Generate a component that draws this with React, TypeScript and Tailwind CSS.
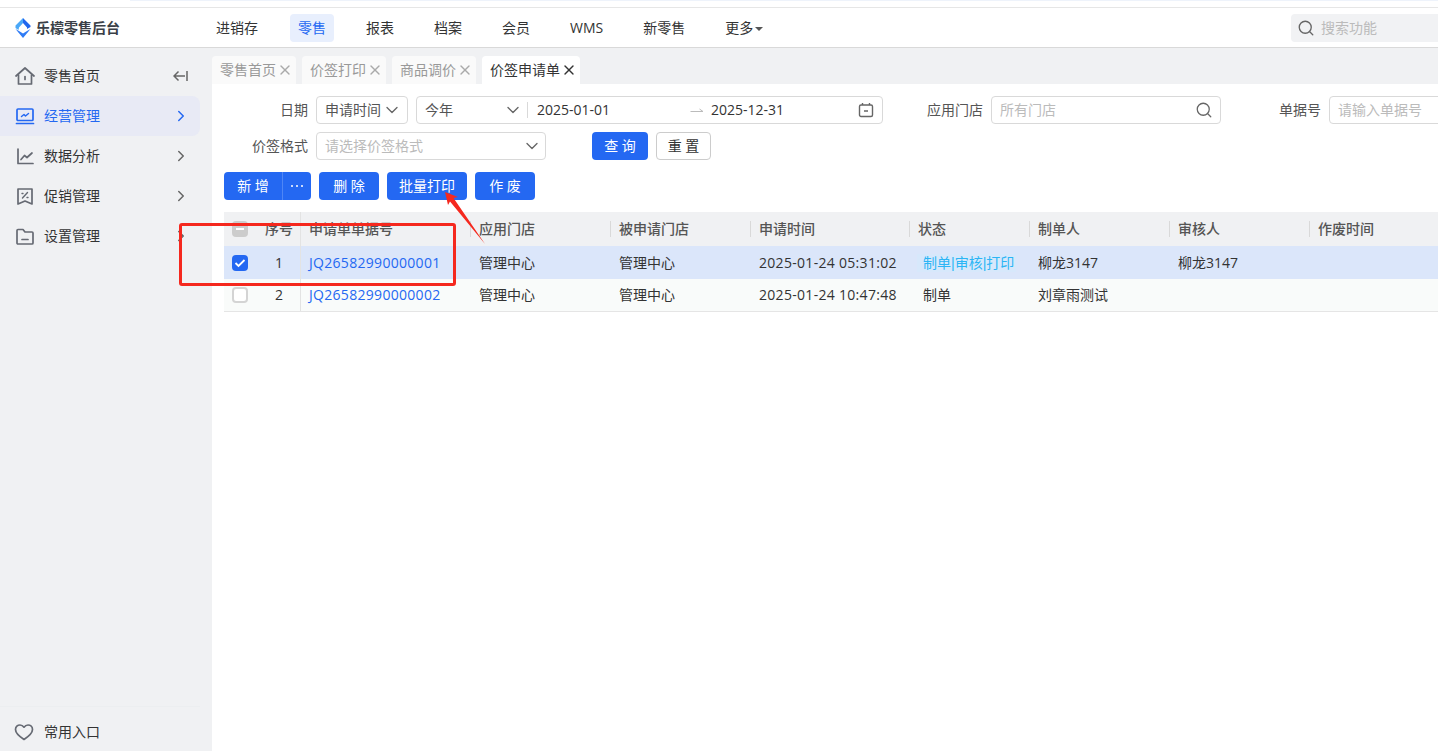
import { ChevronDown, ChevronRight, Search, X } from 'lucide-react'

const font = { fontFamily: '"Open Sans", "Noto Sans CJK SC", sans-serif' }

const navItems = ['进销存', '零售', '报表', '档案', '会员', 'WMS', '新零售']
const tabs = ['零售首页', '价签打印', '商品调价', '价签申请单']
const columns = ['应用门店', '被申请门店', '申请时间', '状态', '制单人', '审核人', '作废时间']
const gridCols = 'grid grid-cols-[38px_38px_170px_140px_140px_159px_120px_140px_140px_1fr]'

function Logo() {
  return (
    <svg width="16" height="20" viewBox="0 0 16 20">
      <path d="M8 0 L15.5 7.5 L15.5 9 L12 11 L12 9.5 L8 5 Z" fill="#1f66ee" />
      <path d="M8 0 L0.5 7.5 L0.5 10 L3.5 12 L4 9.5 L8 5 Z" fill="#4aa8f8" />
      <path d="M0.5 11 L8 20 L15.5 11 L12 13 L8 15.5 L4 13 Z" fill="#2f7bf5" />
      <path d="M8 7 L11 10.2 L8 13.4 L5 10.2 Z" fill="#fff" />
    </svg>
  )
}

function MenuIcon({ name, active }: { name: string; active?: boolean }) {
  const color = active ? '#2468f2' : '#666a73'
  return (
    <svg width="20" height="20" viewBox="0 0 20 20" fill="none" stroke={color} strokeWidth="1.7" strokeLinejoin="round" strokeLinecap="round">
      {name === 'home' && (
        <>
          <path d="M1 10 L10 2 L19 10" />
          <path d="M3.5 9 V18 H16.5 V9" />
          <path d="M10 10.5 V13.5" />
        </>
      )}
      {name === 'monitor' && (
        <>
          <rect x="2" y="3" width="16" height="11.5" rx="1" />
          <path d="M1.5 17.5 H18.5" />
          <path d="M6.5 10.5 L9 8.5 L10.5 10 L13.5 7.5" strokeWidth="1.5" />
        </>
      )}
      {name === 'chart' && (
        <>
          <path d="M3 3 V17.5 H18" />
          <path d="M6 13.5 L9.5 9.5 L12 11.5 L17 7" />
        </>
      )}
      {name === 'tag' && (
        <>
          <path d="M3 3 H17 V18 L10 15 L3 18 Z" />
          <path d="M7.5 12 L12.5 6.5" strokeWidth="1.4" />
          <path d="M7 7.5 H8 M12 11.5 H13" strokeWidth="1.4" />
        </>
      )}
      {name === 'folder' && (
        <>
          <path d="M2 4.5 Q2 3.5 3 3.5 H8 L10 6 H17 Q18 6 18 7 V17 Q18 18 17 18 H3 Q2 18 2 17 Z" />
          <path d="M7 13.5 H13" />
        </>
      )}
      {name === 'heart' && <path d="M10 17.5 C4 13.5 1.5 10.5 1.5 7.5 C1.5 4.8 3.6 3 6 3 C7.6 3 9 3.8 10 5.2 C11 3.8 12.4 3 14 3 C16.4 3 18.5 4.8 18.5 7.5 C18.5 10.5 16 13.5 10 17.5 Z" />}
    </svg>
  )
}

function SideItem({ icon, label, active, tail }: { icon: string; label: string; active?: boolean; tail?: React.ReactNode }) {
  return (
    <div className={`flex items-center h-10 w-[200px] pl-[15px] rounded-r-lg ${active ? 'bg-[#e8eaf5] text-[#2468f2]' : 'text-[#333]'}`}>
      <MenuIcon name={icon} active={active} />
      <span className="ml-[9px] text-sm flex-1">{label}</span>
      <span className="w-[19px] mr-[10px] flex justify-center">{tail}</span>
    </div>
  )
}

function Sidebar() {
  const chevron = <ChevronRight size={18} className="text-[#666]" />
  return (
    <aside className="w-[212px] shrink-0 bg-[#f0f1f3] flex flex-col pt-2">
      <SideItem
        icon="home"
        label="零售首页"
        tail={
          <svg width="15" height="12" viewBox="0 0 15 12" fill="none" stroke="#666" strokeWidth="1.5">
            <path d="M14 1 V11 M12 6 H1 M5.5 1.5 L1 6 L5.5 10.5" />
          </svg>
        }
      />
      <SideItem icon="monitor" label="经营管理" active tail={<ChevronRight size={18} className="text-[#2468f2]" />} />
      <SideItem icon="chart" label="数据分析" tail={chevron} />
      <SideItem icon="tag" label="促销管理" tail={chevron} />
      <SideItem icon="folder" label="设置管理" tail={chevron} />
      <div className="mt-auto mr-3 h-[45px] pt-[6px] border-t border-[#eceef0] flex items-center pl-[14px] text-sm text-[#333]">
        <MenuIcon name="heart" />
        <span className="ml-[10px]">常用入口</span>
      </div>
    </aside>
  )
}

function Header() {
  return (
    <header className="h-10 shrink-0 border-b border-[#d9d9d9] bg-white flex items-center text-sm text-[#333]">
      <div className="w-[216px] shrink-0 pl-[15px] flex items-center gap-[5px]">
        <Logo />
        <span className="font-bold text-[#3a3f47]">乐檬零售后台</span>
      </div>
      <nav className="flex items-center gap-6 -ml-2">
        {navItems.map((n) => (
          <span key={n} className={`h-7 px-2 rounded flex items-center ${n === '零售' ? 'bg-[#e8effd] text-[#2468f2]' : ''}`}>{n}</span>
        ))}
        <span className="h-7 px-2 flex items-center gap-0.5">
          更多
          <span className="w-0 h-0 border-x-4 border-x-transparent border-t-4 border-t-[#555] mt-0.5" />
        </span>
      </nav>
      <div className="ml-auto w-[147px] h-7 bg-[#f1f2f4] rounded-l flex items-center pl-[6px] gap-[6px] text-[#bbb]">
        <Search size={18} className="text-[#666]" strokeWidth={1.8} />
        搜索功能
      </div>
    </header>
  )
}

function Tabs() {
  return (
    <div className="h-9 bg-[#f0f1f3] flex items-end gap-1.5 shrink-0">
      {tabs.map((t, i) => {
        const active = i === tabs.length - 1
        return (
          <div key={t} className={`h-7 pl-2 pr-[3px] flex items-center gap-px text-sm rounded-t ${active ? 'bg-white text-[#333]' : 'bg-[#fafafa] text-[#999]'}`}>
            {t}
            <X size={16} strokeWidth={2} className={active ? 'text-[#333]' : 'text-[#aaa]'} />
          </div>
        )
      })}
    </div>
  )
}

function Box({ className, children }: { className: string; children?: React.ReactNode }) {
  return <div className={`h-7 shrink-0 border border-[#d9d9d9] rounded flex items-center text-sm whitespace-nowrap ${className}`}>{children}</div>
}

function Label({ className, children }: { className: string; children: React.ReactNode }) {
  return <span className={`text-sm text-[#555] text-right shrink-0 ${className}`}>{children}</span>
}

function Btn({ className, children }: { className: string; children: React.ReactNode }) {
  return <button className={`h-7 bg-[#2468f2] text-white text-sm rounded flex items-center justify-center ${className}`}>{children}</button>
}

function Filters() {
  return (
    <div className="pl-3 pt-3 flex flex-col gap-2">
      <div className="flex items-center">
        <Label className="w-[84px] mr-2">日期</Label>
        <Box className="w-[92px] pl-2 pr-[5px] justify-between text-[#555]">
          申请时间
          <ChevronDown size={20} strokeWidth={1.6} className="text-[#666]" />
        </Box>
        <Box className="w-[467px] ml-2 pl-2 pr-2 text-[#333]">
          <span className="text-[#555] w-[78px]">今年</span>
          <ChevronDown size={20} strokeWidth={1.6} className="text-[#666]" />
          <span className="w-px h-4 bg-[#d9d9d9] ml-1 mr-[9px]" />
          <span className="w-[153px]">2025-01-01</span>
          <svg className="w-[21px] shrink-0" width="21" height="8" viewBox="0 0 21 8" fill="none" stroke="#bbb" strokeWidth="1">
            <path d="M0.5 5.5 H13 L9.5 3" />
          </svg>
          <span>2025-12-31</span>
          <svg className="ml-auto" width="16" height="16" viewBox="0 0 16 16" fill="none" stroke="#666" strokeWidth="1.4">
            <rect x="1.5" y="3" width="13" height="11.5" rx="1.5" />
            <path d="M4.5 1 V3 M11.5 1 V3 M6 9 H10" />
          </svg>
        </Box>
        <Label className="w-[56px] ml-[44px] mr-2">应用门店</Label>
        <Box className="w-[230px] pl-2 pr-[7px] justify-between text-[#bbb]">
          所有门店
          <Search size={18} strokeWidth={1.7} className="text-[#666]" />
        </Box>
        <Label className="w-[42px] ml-[58px] mr-2">单据号</Label>
        <Box className="w-[140px] pl-2 text-[#bbb]">请输入单据号</Box>
      </div>
      <div className="flex items-center">
        <Label className="w-[84px] mr-2">价签格式</Label>
        <Box className="w-[230px] pl-2 pr-[3px] justify-between text-[#bbb]">
          请选择价签格式
          <ChevronDown size={20} strokeWidth={1.6} className="text-[#666]" />
        </Box>
        <Btn className="w-14 ml-[46px]">查 询</Btn>
        <button className="w-[55px] h-7 ml-2 border border-[#ccc] rounded text-sm text-[#333]">重 置</button>
      </div>
      <div className="flex items-center gap-2 mt-1">
        <div className="flex w-[87px] h-7 rounded bg-[#2468f2] text-white text-sm">
          <span className="w-[59px] flex items-center justify-center border-r border-[#4f86f5]">新 增</span>
          <span className="flex-1 flex items-center justify-center gap-[3px]">
            <span className="w-[2px] h-[2px] rounded-full bg-white" />
            <span className="w-[2px] h-[2px] rounded-full bg-white" />
            <span className="w-[2px] h-[2px] rounded-full bg-white" />
          </span>
        </div>
        <Btn className="w-[60px]">删 除</Btn>
        <Btn className="w-20">批量打印</Btn>
        <Btn className="w-[60px]">作 废</Btn>
      </div>
    </div>
  )
}

function Check({ state }: { state: 'mixed' | 'on' | 'off' }) {
  if (state === 'mixed') {
    return (
      <span className="w-4 h-4 rounded-sm bg-[#ccc] flex items-center justify-center">
        <span className="w-2 h-0.5 bg-white" />
      </span>
    )
  }
  if (state === 'on') {
    return (
      <span className="w-4 h-4 rounded-sm bg-[#2468f2] flex items-center justify-center">
        <svg width="12" height="12" viewBox="0 0 12 12" fill="none" stroke="#fff" strokeWidth="1.8">
          <path d="M1.5 6 L4.5 9 L10.5 3" />
        </svg>
      </span>
    )
  }
  return <span className="w-4 h-4 rounded-sm bg-white border-2 border-[#d4d4d4]" />
}

function Row({ n, no, time, status, maker, checker, selected }: { n: number; no: string; time: string; status: React.ReactNode; maker: string; checker: string; selected?: boolean }) {
  return (
    <div className={`${gridCols} h-[33px] items-center text-sm text-[#333] ${selected ? 'bg-[#dbe6fa]' : 'bg-[#f9fbfa] border-b border-[#e5e5e5]'}`}>
      <span className="flex justify-center pr-[6px]">
        <Check state={selected ? 'on' : 'off'} />
      </span>
      <span className="pr-[4px] text-center">{n}</span>
      <span className="h-full flex items-center pl-2 border-l border-[#e3e3e3] text-[#2468f2] tracking-[0.3px]">{no}</span>
      <span className="pl-[9px]">管理中心</span>
      <span className="pl-[9px]">管理中心</span>
      <span className="pl-[9px] tracking-[0.3px]">{time}</span>
      <span className="pl-[9px]">{status}</span>
      <span className="pl-[9px]">{maker}</span>
      <span className="pl-[9px]">{checker}</span>
      <span />
    </div>
  )
}

function DataTable() {
  const bar = <span className="font-['Liberation_Sans']">|</span>
  return (
    <div className="ml-3 mt-3 text-sm">
      <div className={`${gridCols} h-[34px] items-center bg-[#f0f1f3] font-medium text-[#555]`}>
        <span className="flex justify-center pr-[6px]">
          <Check state="mixed" />
        </span>
        <span className="pr-[4px] text-center">序号</span>
        <span className="h-full flex items-center pl-2 border-l border-[#e3e3e3]">申请单单据号</span>
        {columns.map((c) => (
          <span key={c} className="pl-[9px] relative">
            <span className="absolute left-0 top-[2px] h-4 w-px bg-[#d9d9d9]" />
            {c}
          </span>
        ))}
      </div>
      <Row
        n={1}
        no="JQ26582990000001"
        time="2025-01-24 05:31:02"
        maker="柳龙3147"
        checker="柳龙3147"
        selected
        status={
          <span className="block w-[99px] -ml-[1px] pl-[6px] bg-[#d7e8fb] text-[#2bb5f5] leading-[18px] whitespace-nowrap">
            制单{bar}审核{bar}打印
          </span>
        }
      />
      <Row n={2} no="JQ26582990000002" time="2025-01-24 10:47:48" maker="刘章雨测试" checker="" status={<span className="pl-[5px]">制单</span>} />
    </div>
  )
}

export default function App() {
  return (
    <div className="relative h-[751px] w-full overflow-hidden bg-white flex flex-col" style={font}>
      <div className="h-2 shrink-0 border-b border-[#e6e6e6]">
        <div className="ml-[130px] h-px bg-[#eef3fb]" />
      </div>
      <Header />
      <div className="flex flex-1 min-h-0">
        <Sidebar />
        <main className="flex-1 min-w-0 flex flex-col overflow-hidden">
          <Tabs />
          <Filters />
          <DataTable />
        </main>
      </div>
      {/* 截图上的红色标注 */}
      <div className="absolute left-[179px] top-[223px] w-[277px] h-[63px] border-[3px] border-[#f5281e] rounded-[3px]" />
      <svg className="absolute left-[440px] top-[186px]" width="50" height="62" viewBox="0 0 50 62">
        <polygon points="5,6 18,11 13.5,12 45,58 10,15.5 8,19" fill="#f5281e" />
      </svg>
    </div>
  )
}
